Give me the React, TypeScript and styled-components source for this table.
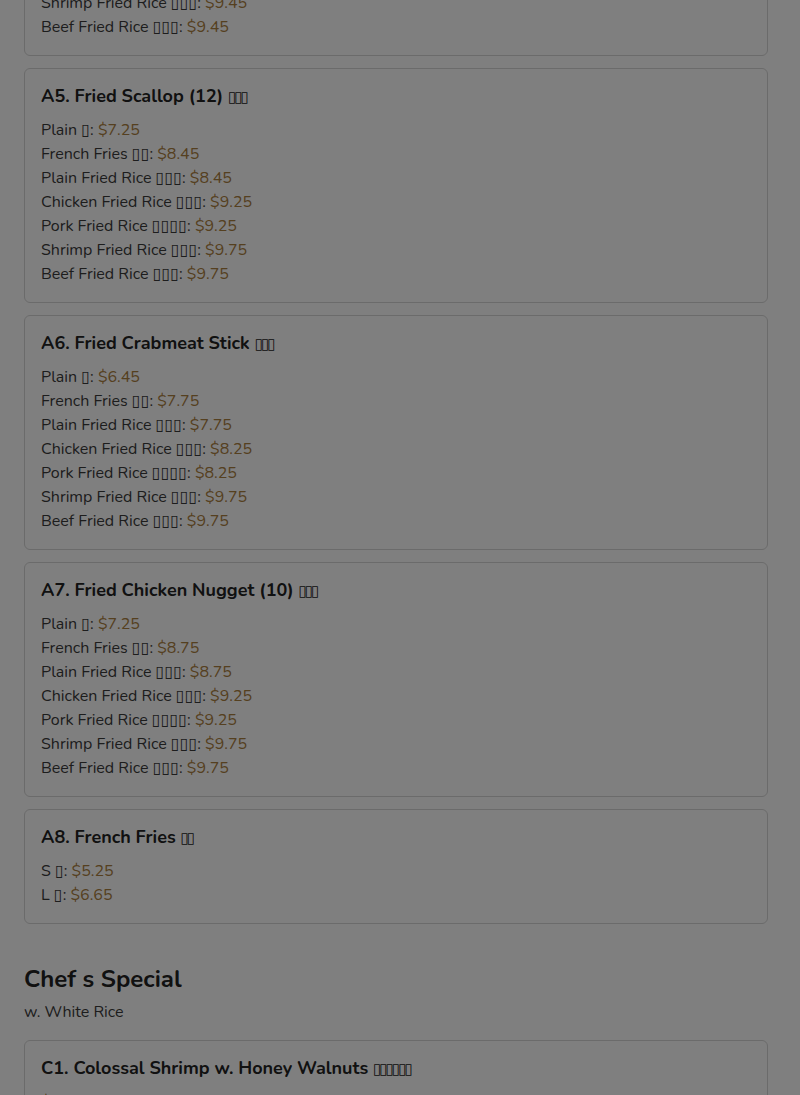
import styled, { createGlobalStyle } from "styled-components";

const GlobalStyle = createGlobalStyle`
  html, body {
    margin: 0;
    padding: 0;
    background: #ffffff;
    overflow: hidden;
  }
  body {
    font-family: "Nunito", "Lato", "Noto Sans", sans-serif;
    color: #3a3a3a;
  }
`;

interface Option {
  label: string;
  zh: string;
  price: string;
}

interface Item {
  code: string;
  name: string;
  zh: string;
  options: Option[];
}

const riceOptions = (p: string[]): Option[] => [
  { label: "Plain", zh: "▯", price: p[0] },
  { label: "French Fries", zh: "▯▯", price: p[1] },
  { label: "Plain Fried Rice", zh: "▯▯▯", price: p[2] },
  { label: "Chicken Fried Rice", zh: "▯▯▯", price: p[3] },
  { label: "Pork Fried Rice", zh: "▯▯▯▯", price: p[4] },
  { label: "Shrimp Fried Rice", zh: "▯▯▯", price: p[5] },
  { label: "Beef Fried Rice", zh: "▯▯▯", price: p[6] },
];

const appetizers: Item[] = [
  {
    code: "A4",
    name: "Fried Shrimp (6)",
    zh: "▯▯▯",
    options: riceOptions(["$6.95", "$8.25", "$8.25", "$8.95", "$8.95", "$9.45", "$9.45"]),
  },
  {
    code: "A5",
    name: "Fried Scallop (12)",
    zh: "▯▯▯",
    options: riceOptions(["$7.25", "$8.45", "$8.45", "$9.25", "$9.25", "$9.75", "$9.75"]),
  },
  {
    code: "A6",
    name: "Fried Crabmeat Stick",
    zh: "▯▯▯",
    options: riceOptions(["$6.45", "$7.75", "$7.75", "$8.25", "$8.25", "$9.75", "$9.75"]),
  },
  {
    code: "A7",
    name: "Fried Chicken Nugget (10)",
    zh: "▯▯▯",
    options: riceOptions(["$7.25", "$8.75", "$8.75", "$9.25", "$9.25", "$9.75", "$9.75"]),
  },
  {
    code: "A8",
    name: "French Fries",
    zh: "▯▯",
    options: [
      { label: "S", zh: "▯", price: "$5.25" },
      { label: "L", zh: "▯", price: "$6.65" },
    ],
  },
];

const specials: Item[] = [
  {
    code: "C1",
    name: "Colossal Shrimp w. Honey Walnuts",
    zh: "▯▯▯▯▯▯",
    options: [{ label: "", zh: "", price: "$18.95" }],
  },
];

function MenuCard({ item }: { item: Item }) {
  return (
    <Card>
      <CardTitle>
        {item.code}. {item.name} <Tofu $title>{item.zh}</Tofu>
      </CardTitle>
      <OptionList>
        {item.options.map((o, i) => (
          <OptionRow key={i}>
            {o.label && (
              <>
                {o.label} <Tofu>{o.zh}</Tofu>:{" "}
              </>
            )}
            <Price>{o.price}</Price>
          </OptionRow>
        ))}
      </OptionList>
    </Card>
  );
}

export default function App() {
  return (
    <>
      <GlobalStyle />
      <Page>
        <Section>
          {appetizers.map((item) => (
            <MenuCard key={item.code} item={item} />
          ))}
        </Section>
        <Section>
          <SectionHead>
            <SectionTitle>Chef s Special</SectionTitle>
            <SectionNote>w. White Rice</SectionNote>
          </SectionHead>
          {specials.map((item) => (
            <MenuCard key={item.code} item={item} />
          ))}
        </Section>
      </Page>
      <Backdrop />
    </>
  );
}

const Page = styled.div`
  padding: 0 32px 0 24px;
  /* page is scrolled: the A4 card starts above the window */
  margin-top: -179px;
`;

const Section = styled.section`
  display: flex;
  flex-direction: column;
  gap: 12px;
  margin-bottom: 39px;
`;

const SectionHead = styled.div`
  display: flex;
  flex-direction: column;
  gap: 5px;
  margin-bottom: 4px;
`;

const SectionTitle = styled.h2`
  margin: 0;
  font-size: 24px;
  line-height: 32px;
  font-weight: 700;
  color: #222;
`;

const SectionNote = styled.div`
  font-size: 16px;
  line-height: 24px;
  color: #3a3a3a;
`;

const Card = styled.div`
  border: 1px solid #d6d6d6;
  border-radius: 6px;
  padding: 17px 16px 16px;
  background: #ffffff;
`;

const CardTitle = styled.div`
  font-size: 18px;
  line-height: 20px;
  font-weight: 700;
  color: #222;
  margin-bottom: 11px;
`;

const OptionList = styled.div`
  display: flex;
  flex-direction: column;
`;

const OptionRow = styled.div`
  font-size: 16px;
  line-height: 24px;
  color: #3a3a3a;
`;

const Tofu = styled.span<{ $title?: boolean }>`
  font-family: "DejaVu Sans", sans-serif;
  font-weight: 400;
  font-size: ${(p) => (p.$title ? "15px" : "16px")};
  letter-spacing: ${(p) => (p.$title ? "-2px" : "0")};
  margin-right: ${(p) => (p.$title ? "1px" : "0")};
`;

const Price = styled.span`
  color: #ab8040;
`;

const Backdrop = styled.div`
  position: fixed;
  inset: 0;
  background: rgba(0, 0, 0, 0.5);
`;
